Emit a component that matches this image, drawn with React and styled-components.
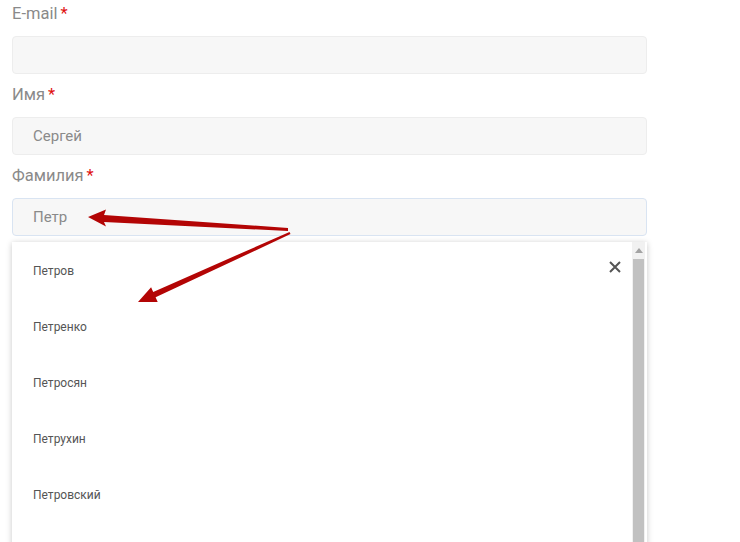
import React from 'react';
import styled, { createGlobalStyle } from 'styled-components';

const Global = createGlobalStyle`
    body{
        margin:0;
        background:#fff;
        font-family: Roboto, "Open Sans", Arial, sans-serif;
    }
`

const Page = styled.div`
    position: relative;
    width: 740px;
    height: 542px;
    overflow: hidden;
`

const Form = styled.div`
    width: 635px;
    padding: 2px 0 0 12px;
    display: flex;
    flex-direction: column;
`

const Label = styled.div`
    font-size: 16.5px;
    line-height: 24px;
    color: #8a8a8a;
    margin-bottom: 10px;
    span{
        color: #e01010;
        margin-left: 3px;
    }
`

const Input = styled.div`
    box-sizing: border-box;
    height: 38px;
    border: 1px solid ${props => props.focused ? '#d9e4f2' : '#ededed'};
    border-radius: 4px;
    background: #f7f7f7;
    padding: 0 20px;
    display: flex;
    align-items: center;
    font-size: 15px;
    color: #8a8a8a;
    margin-bottom: 9px;
`

const Dropdown = styled.div`
    margin-top: -3px;
    height: 320px;
    background: #fff;
    box-shadow: 0 1px 6px rgba(0,0,0,0.22);
    display: flex;
    position: relative;
`

const List = styled.ul`
    flex: 1;
    margin: 0;
    padding: 1px 0 0;
    list-style: none;
    overflow: hidden;
`

const Item = styled.li`
    height: 56px;
    padding-left: 21px;
    display: flex;
    align-items: center;
    font-size: 12px;
    color: #555;
`

const Close = styled.div`
    position: absolute;
    right: 26px;
    top: 19px;
    width: 12px;
    height: 12px;
    display: flex;
`

const Scrollbar = styled.div`
    width: 13px;
    margin-right: 2px;
    background: #f1f1f1;
    display: flex;
    flex-direction: column;
    align-items: center;
    .up{
        height: 17px;
        display: flex;
        align-items: center;
        justify-content: center;
    }
    .thumb{
        width: 11px;
        flex: 1;
        background: #c1c1c1;
    }
`

const Arrows = styled.svg`
    position: absolute;
    left: 0;
    top: 0;
    pointer-events: none;
`

const names = ['Петров', 'Петренко', 'Петросян', 'Петрухин', 'Петровский'];

const App = () => {
    return (
        <Page>
            <Global />
            <Form>
                <Label>E-mail<span>*</span></Label>
                <Input />
                <Label>Имя<span>*</span></Label>
                <Input>Сергей</Input>
                <Label>Фамилия<span>*</span></Label>
                <Input focused>Петр</Input>
                <Dropdown>
                    <List>
                        {names.map(n => <Item key={n}>{n}</Item>)}
                    </List>
                    <Close>
                        <svg width="12" height="12" viewBox="0 0 12 12">
                            <path d="M1 1L11 11M11 1L1 11" stroke="#555" strokeWidth="2" />
                        </svg>
                    </Close>
                    <Scrollbar>
                        <div className="up">
                            <svg width="8" height="5" viewBox="0 0 8 5"><path d="M0 5L4 0L8 5Z" fill="#a3a3a3" /></svg>
                        </div>
                        <div className="thumb" />
                    </Scrollbar>
                </Dropdown>
            </Form>
            <Arrows width="740" height="542" viewBox="0 0 740 542">
                <polygon points="88,217 106,209.5 104,215 288,228 288,231 104,222 106,226.5" fill="#b30505" />
                <polygon points="138,302 151.1,287.3 153.2,291.9 289.5,231.9 290.5,234.1 155.6,297.3 157.7,301.9" fill="#b30505" />
            </Arrows>
        </Page>
    )
}

export default App
